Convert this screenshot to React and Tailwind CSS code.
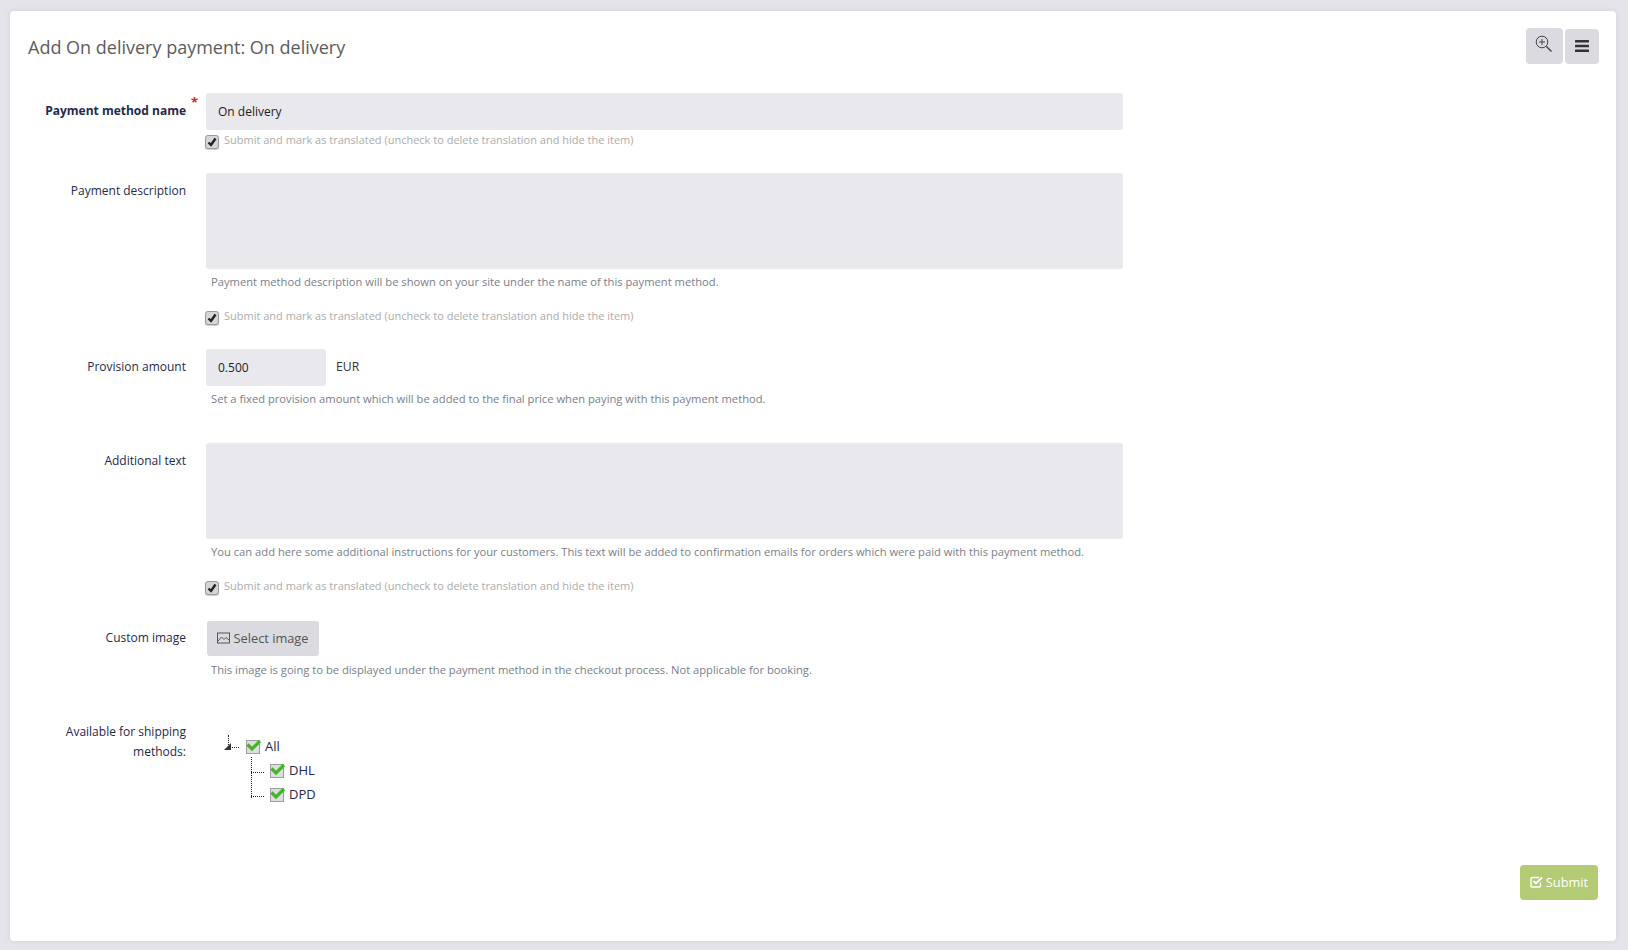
import React from "react";

const font = { fontFamily: '"Open Sans", sans-serif' };

function MarkTranslated() {
  return (
    <div className="flex items-start h-[20px]">
      <span className="ml-[-1px] mt-[3px] flex h-[14px] w-[14px] items-center justify-center rounded-[3px] border border-[#9a9a9a] bg-[#d6d6da] shadow-[0_1px_1px_rgba(0,0,0,0.2)]">
        <svg width="10" height="10" viewBox="0 0 10 10">
          <path d="M1.5 5.5 L4 8 L8.5 1.5" fill="none" stroke="#222" strokeWidth="2.4" />
        </svg>
      </span>
      <span className="ml-[5px] text-[11px] leading-[16px] text-[#adadad]">
        Submit and mark as translated (uncheck to delete translation and hide the item)
      </span>
    </div>
  );
}

function Help({ children }) {
  return <div className="pl-[5px] text-[11.2px] leading-[16px] text-[#7a808a]">{children}</div>;
}

function Row({ label, bold, required, className, labelPad = "pt-[8px]", children }) {
  return (
    <div className={"flex " + className}>
      <div
        className={
          "relative w-[158px] shrink-0 text-right text-[12px] leading-[20px] text-[#1f2a4d] " +
          labelPad +
          (bold ? " font-bold" : "")
        }
      >
        {label}
        {required && <span className="absolute right-[-12px] top-[-1px] text-[13px] font-bold text-[#d9261c]">*</span>}
      </div>
      <div className="ml-[20px] w-[917px]">{children}</div>
    </div>
  );
}

function TreeCheck() {
  return (
    <svg width="16" height="15" viewBox="0 0 16 15" className="mb-[1px] shrink-0">
      <rect x="0.5" y="1.5" width="13" height="13" fill="#dedede" stroke="#a0a0a0" />
      <path d="M1.5 5.5 L6 10 L14 2" fill="none" stroke="#45b52e" strokeWidth="3.2" />
    </svg>
  );
}

function Dots({ className }) {
  return <span className={"absolute border-dotted border-[#222] " + className} />;
}

export default function App() {
  return (
    <div className="h-[950px] overflow-hidden bg-[#e4e4ea] pt-[11px] px-[10px] antialiased" style={font}>
      <div className="flex h-[930px] w-[1606px] flex-col rounded-[4px] bg-white px-[18px] shadow-[0_0_6px_rgba(0,0,0,0.08)]">
        <div className="flex items-start justify-between pt-[17px]">
          <h1 className="mt-[7px] text-[18px] font-normal leading-[24px] text-[#5c5c5c]">
            Add On delivery payment: On delivery
          </h1>
          <div className="mr-[-1px] flex gap-[2px]">
            <button className="flex h-[36px] w-[37px] items-center justify-center rounded-[4px] bg-[#dadae0]">
              <svg width="18" height="18" viewBox="0 0 18 18" fill="none" stroke="#444" strokeWidth="1" className="mb-[4px] mr-[1px]">
                <circle cx="7" cy="7" r="5.8" />
                <path d="M7 4v6M4 7h6" />
                <path d="M11.4 11.4 L16.5 16.5" strokeWidth="1.4" />
              </svg>
            </button>
            <button className="mt-[1px] flex h-[35px] w-[34px] items-center justify-center rounded-[4px] bg-[#dadae0]">
              <svg width="14" height="12" viewBox="0 0 14 12" fill="#333" className="mb-[2px]">
                <rect x="0" y="0" width="14" height="2.4" rx="0.5" />
                <rect x="0" y="4.8" width="14" height="2.4" rx="0.5" />
                <rect x="0" y="9.6" width="14" height="2.4" rx="0.5" />
              </svg>
            </button>
          </div>
        </div>

        <Row label="Payment method name" bold required className="mt-[29px]">
          <div className="flex h-[37px] items-center rounded-[3px] bg-[#e8e8ed] px-[12px] text-[12px] text-[#222]">On delivery</div>
          <div className="mt-[2px]"><MarkTranslated /></div>
        </Row>

        <Row label="Payment description" className="mt-[21px]">
          <div className="h-[96px] rounded-[3px] bg-[#e8e8ed]" />
          <div className="mt-[5px]"><Help>Payment method description will be shown on your site under the name of this payment method.</Help></div>
          <div className="mt-[18px]"><MarkTranslated /></div>
        </Row>

        <Row label="Provision amount" className="mt-[21px]">
          <div className="flex items-center">
            <div className="flex h-[37px] w-[120px] items-center rounded-[3px] bg-[#e8e8ed] px-[12px] text-[12px] text-[#222]">0.500</div>
            <span className="ml-[10px] text-[12.2px] text-[#333]">EUR</span>
          </div>
          <div className="mt-[5px]"><Help>Set a fixed provision amount which will be added to the final price when paying with this payment method.</Help></div>
        </Row>

        <Row label="Additional text" className="mt-[36px]">
          <div className="h-[96px] rounded-[3px] bg-[#e8e8ed]" />
          <div className="mt-[5px]"><Help>You can add here some additional instructions for your customers. This text will be added to confirmation emails for orders which were paid with this payment method.</Help></div>
          <div className="mt-[18px]"><MarkTranslated /></div>
        </Row>

        <Row label="Custom image" labelPad="pt-[7px]" className="mt-[23px]">
          <button className="ml-[1px] flex h-[35px] w-[112px] items-center justify-center rounded-[3px] bg-[#dadae0] text-[12.8px] text-[#555]">
            <svg width="13" height="12" viewBox="0 0 13 12" fill="none" stroke="#555" strokeWidth="1" className="ml-[-1px] mr-[4px] mb-[2px]">
              <rect x="0.5" y="1" width="12" height="10" />
              <path d="M1 9 L4.5 5 L7 7.5 L9 5.5 L12 8" />
            </svg>
            Select image
          </button>
          <div className="mt-[6px]"><Help>This image is going to be displayed under the payment method in the checkout process. Not applicable for booking.</Help></div>
        </Row>

        <Row label="Available for shipping methods:" labelPad="pt-[8px]" className="mt-[36px]">
          <div className="relative ml-[19px] mt-[21px] text-[13px] text-[#1f2a4d]">
            <Dots className="left-[3px] top-[0px] h-[12px] border-l" />
            <svg width="7" height="7" viewBox="0 0 7 7" className="absolute left-[-1px] top-[8px]">
              <path d="M7 0 V7 H0 Z" fill="#333" />
            </svg>
            <Dots className="left-[7px] top-[12px] w-[7px] border-t" />
            <Dots className="left-[26px] top-[22px] h-[41px] border-l" />
            <Dots className="left-[26px] top-[37px] w-[13px] border-t" />
            <Dots className="left-[26px] top-[61px] w-[13px] border-t" />
            <div className="flex h-[24px] items-center pl-[21px]"><TreeCheck /><span className="ml-[3px]">All</span></div>
            <div className="flex h-[24px] items-center pl-[45px]"><TreeCheck /><span className="ml-[3px]">DHL</span></div>
            <div className="flex h-[24px] items-center pl-[45px]"><TreeCheck /><span className="ml-[3px]">DPD</span></div>
          </div>
        </Row>

        <div className="mt-[58px] flex justify-end">
          <button className="flex h-[35px] w-[78px] items-center justify-center rounded-[4px] bg-[#b2cb74] text-[12.8px] text-white">
            <svg width="13" height="13" viewBox="0 0 13 13" fill="none" stroke="#fff" strokeWidth="1.4" className="mr-[3px] mb-[2px]">
              <path d="M10.5 7.5V11a1 1 0 0 1-1 1H2a1 1 0 0 1-1-1V3.5a1 1 0 0 1 1-1h7" />
              <path d="M3.5 6 L6 8.5 L12 2.5" strokeWidth="1.8" />
            </svg>
            Submit
          </button>
        </div>
      </div>
    </div>
  );
}
